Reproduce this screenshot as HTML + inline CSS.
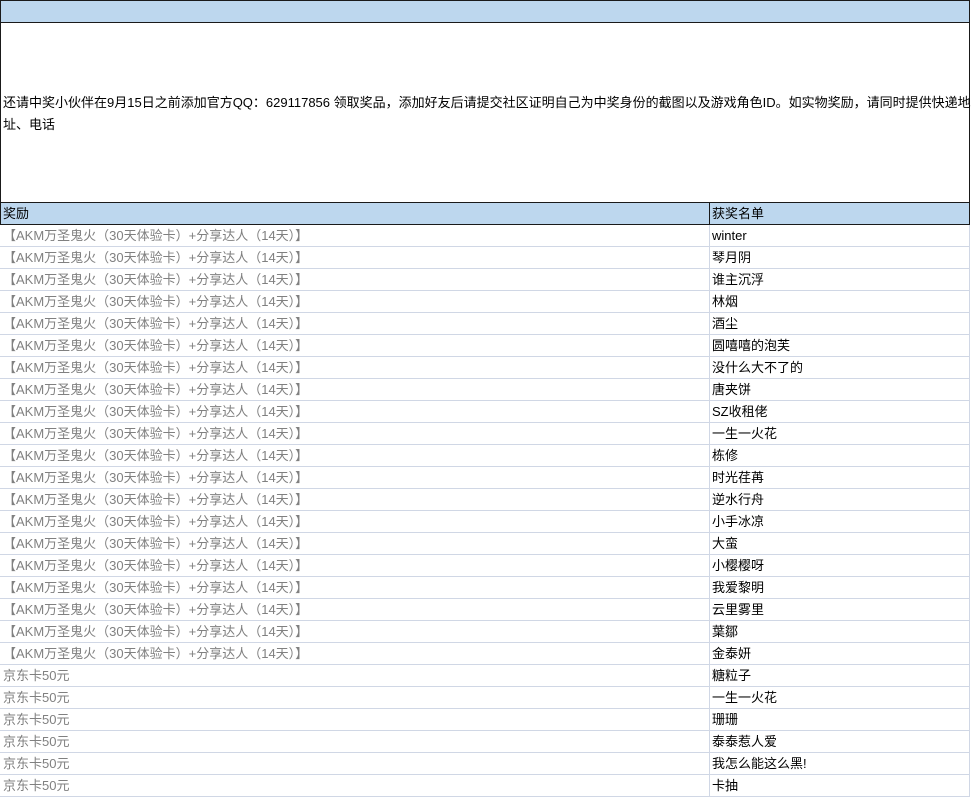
<!DOCTYPE html>
<html><head><meta charset="utf-8"><style>
body{margin:0;width:971px;height:798px;background:#fff;position:relative;overflow:hidden;font-family:"Liberation Sans","Noto Sans CJK SC",sans-serif;font-size:13px;color:#000}
div{position:absolute;box-sizing:border-box}
.bar{left:0;width:970px;background:#bdd7ee;border:1px solid #1a1a1a}
.r{left:0;width:970px;height:22px;border-bottom:1px solid #d0d7e5;border-right:1px solid #d0d7e5}
.a,.b{position:absolute;top:0;line-height:21px;white-space:nowrap}
.a{left:3px;color:#808080}
.b{left:712px}
.v{left:709px;top:0;width:1px;height:22px;background:#d0d7e5}
</style></head><body>
<div class="bar" style="top:0;height:23px"></div>
<div style="left:0;top:22px;width:970px;height:181px;border-left:1px solid #1a1a1a;border-right:1px solid #1a1a1a"></div>
<div style="left:3px;top:92px;width:968px;line-height:22px;white-space:nowrap">还请中奖小伙伴在9月15日之前添加官方QQ：629117856 领取奖品，添加好友后请提交社区证明自己为中奖身份的截图以及游戏角色ID。如实物奖励，请同时提供快递地<br>址、电话</div>
<div class="bar" style="top:202px;height:23px"></div>
<div style="left:3px;top:202px;line-height:23px">奖励</div>
<div style="left:709px;top:202px;width:1px;height:23px;background:#1a1a1a"></div>
<div style="left:712px;top:202px;line-height:23px">获奖名单</div>
<div style="left:0;top:225px;width:971px;height:580px">
<div class="r" style="top:0"><span class="a">【AKM万圣鬼火（30天体验卡）+分享达人（14天）】</span><div class="v"></div><span class="b">winter</span></div>
<div class="r" style="top:22px"><span class="a">【AKM万圣鬼火（30天体验卡）+分享达人（14天）】</span><div class="v"></div><span class="b">琴月阴</span></div>
<div class="r" style="top:44px"><span class="a">【AKM万圣鬼火（30天体验卡）+分享达人（14天）】</span><div class="v"></div><span class="b">谁主沉浮</span></div>
<div class="r" style="top:66px"><span class="a">【AKM万圣鬼火（30天体验卡）+分享达人（14天）】</span><div class="v"></div><span class="b">林烟</span></div>
<div class="r" style="top:88px"><span class="a">【AKM万圣鬼火（30天体验卡）+分享达人（14天）】</span><div class="v"></div><span class="b">酒尘</span></div>
<div class="r" style="top:110px"><span class="a">【AKM万圣鬼火（30天体验卡）+分享达人（14天）】</span><div class="v"></div><span class="b">圆嘻嘻的泡芙</span></div>
<div class="r" style="top:132px"><span class="a">【AKM万圣鬼火（30天体验卡）+分享达人（14天）】</span><div class="v"></div><span class="b">没什么大不了的</span></div>
<div class="r" style="top:154px"><span class="a">【AKM万圣鬼火（30天体验卡）+分享达人（14天）】</span><div class="v"></div><span class="b">唐夹饼</span></div>
<div class="r" style="top:176px"><span class="a">【AKM万圣鬼火（30天体验卡）+分享达人（14天）】</span><div class="v"></div><span class="b">SZ收租佬</span></div>
<div class="r" style="top:198px"><span class="a">【AKM万圣鬼火（30天体验卡）+分享达人（14天）】</span><div class="v"></div><span class="b">一生一火花</span></div>
<div class="r" style="top:220px"><span class="a">【AKM万圣鬼火（30天体验卡）+分享达人（14天）】</span><div class="v"></div><span class="b">栋修</span></div>
<div class="r" style="top:242px"><span class="a">【AKM万圣鬼火（30天体验卡）+分享达人（14天）】</span><div class="v"></div><span class="b">时光荏苒</span></div>
<div class="r" style="top:264px"><span class="a">【AKM万圣鬼火（30天体验卡）+分享达人（14天）】</span><div class="v"></div><span class="b">逆水行舟</span></div>
<div class="r" style="top:286px"><span class="a">【AKM万圣鬼火（30天体验卡）+分享达人（14天）】</span><div class="v"></div><span class="b">小手冰凉</span></div>
<div class="r" style="top:308px"><span class="a">【AKM万圣鬼火（30天体验卡）+分享达人（14天）】</span><div class="v"></div><span class="b">大蛮</span></div>
<div class="r" style="top:330px"><span class="a">【AKM万圣鬼火（30天体验卡）+分享达人（14天）】</span><div class="v"></div><span class="b">小樱樱呀</span></div>
<div class="r" style="top:352px"><span class="a">【AKM万圣鬼火（30天体验卡）+分享达人（14天）】</span><div class="v"></div><span class="b">我爱黎明</span></div>
<div class="r" style="top:374px"><span class="a">【AKM万圣鬼火（30天体验卡）+分享达人（14天）】</span><div class="v"></div><span class="b">云里雾里</span></div>
<div class="r" style="top:396px"><span class="a">【AKM万圣鬼火（30天体验卡）+分享达人（14天）】</span><div class="v"></div><span class="b">葉鄒</span></div>
<div class="r" style="top:418px"><span class="a">【AKM万圣鬼火（30天体验卡）+分享达人（14天）】</span><div class="v"></div><span class="b">金泰妍</span></div>
<div class="r" style="top:440px"><span class="a">京东卡50元</span><div class="v"></div><span class="b">糖粒子</span></div>
<div class="r" style="top:462px"><span class="a">京东卡50元</span><div class="v"></div><span class="b">一生一火花</span></div>
<div class="r" style="top:484px"><span class="a">京东卡50元</span><div class="v"></div><span class="b">珊珊</span></div>
<div class="r" style="top:506px"><span class="a">京东卡50元</span><div class="v"></div><span class="b">泰泰惹人爱</span></div>
<div class="r" style="top:528px"><span class="a">京东卡50元</span><div class="v"></div><span class="b">我怎么能这么黑!</span></div>
<div class="r" style="top:550px"><span class="a">京东卡50元</span><div class="v"></div><span class="b">卡抽</span></div>
</div>
</body></html>
